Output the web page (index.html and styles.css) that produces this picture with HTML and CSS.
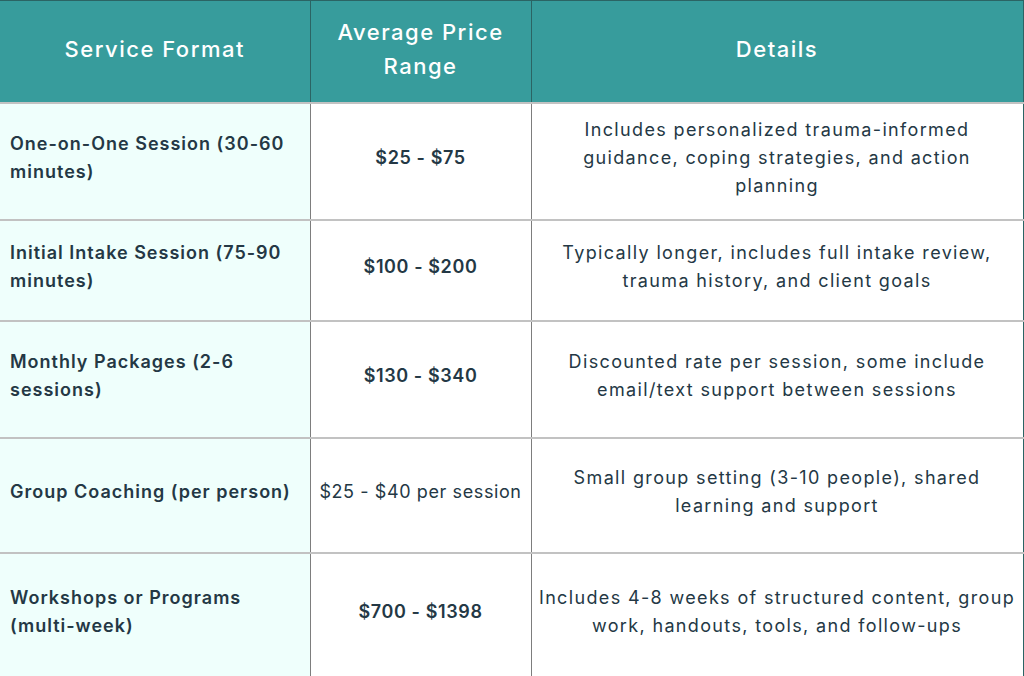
FILE: index.html
```html
<!DOCTYPE html>
<html lang="en">
<head>
<meta charset="utf-8">
<title>Service Pricing</title>
<link rel="stylesheet" href="styles.css">
</head>
<body>
<table class="pricing">
  <colgroup>
    <col class="c-format">
    <col class="c-price">
    <col class="c-details">
  </colgroup>
  <thead>
    <tr class="head-row">
      <th>Service Format</th>
      <th>Average Price<br>Range</th>
      <th>Details</th>
    </tr>
  </thead>
  <tbody>
    <tr class="row-a">
      <td class="format">One-on-One Session (30-60 minutes)</td>
      <td class="price">$25 - $75</td>
      <td class="details">Includes personalized trauma-informed guidance, coping strategies, and action planning</td>
    </tr>
    <tr class="row-b">
      <td class="format">Initial Intake Session (75-90 minutes)</td>
      <td class="price">$100 - $200</td>
      <td class="details">Typically longer, includes full intake review, trauma history, and client goals</td>
    </tr>
    <tr class="row-a">
      <td class="format">Monthly Packages (2-6 sessions)</td>
      <td class="price">$130 - $340</td>
      <td class="details">Discounted rate per session, some include email/text support between sessions</td>
    </tr>
    <tr class="row-c">
      <td class="format">Group Coaching (per person)</td>
      <td class="price plain">$25 - $40 per session</td>
      <td class="details">Small group setting (3-10 people), shared learning and support</td>
    </tr>
    <tr class="row-d">
      <td class="format">Workshops or Programs (multi-week)</td>
      <td class="price">$700 - $1398</td>
      <td class="details">Includes 4-8 weeks of structured content, group work, handouts, tools, and follow-ups</td>
    </tr>
  </tbody>
</table>
</body>
</html>
```
FILE: styles.css
```css
html, body {
  margin: 0;
  padding: 0;
  background: #ffffff;
}

body {
  font-family: "Inter", "Open Sans", sans-serif;
  color: #243845;
  overflow: hidden;
}

.pricing {
  width: 1023px;
  border-collapse: collapse;
  table-layout: fixed;
  border-top: 1px solid #2b6464;
  border-right: 1px solid #2b6464;
}

.c-format { width: 310px; }
.c-price { width: 221px; }
.c-details { width: 492px; }

.head-row {
  height: 102px;
  background: #379c9c;
}

.head-row th {
  color: #ffffff;
  font-size: 22px;
  font-weight: 500;
  letter-spacing: 1.5px;
  line-height: 34px;
  text-align: center;
  vertical-align: middle;
  padding: 0 8px 5px;
  border-left: 1px solid #2b6464;
  border-bottom: 1px solid #7d7d7d;
}

.head-row th:first-child {
  border-left: none;
}

td {
  font-size: 18px;
  line-height: 28px;
  vertical-align: middle;
  border-top: 2px solid #c2c2c2;
  border-left: 1px solid #7d7d7d;
  padding: 0 8px 6px 10px;
}

td.format {
  border-left: none;
  background: #effffc;
  font-weight: 600;
  letter-spacing: 1px;
  text-align: left;
}

td.price {
  font-weight: 600;
  letter-spacing: 0.6px;
  text-align: center;
  padding-left: 6px;
  padding-right: 6px;
}

td.price.plain {
  font-weight: 400;
}

td.details {
  font-weight: 400;
  letter-spacing: 1.35px;
  text-align: center;
  padding-left: 7px;
  padding-right: 7px;
}

.row-a { height: 117px; }
.row-b { height: 101px; }
.row-c { height: 115px; }
.row-d { height: 124px; }
```
